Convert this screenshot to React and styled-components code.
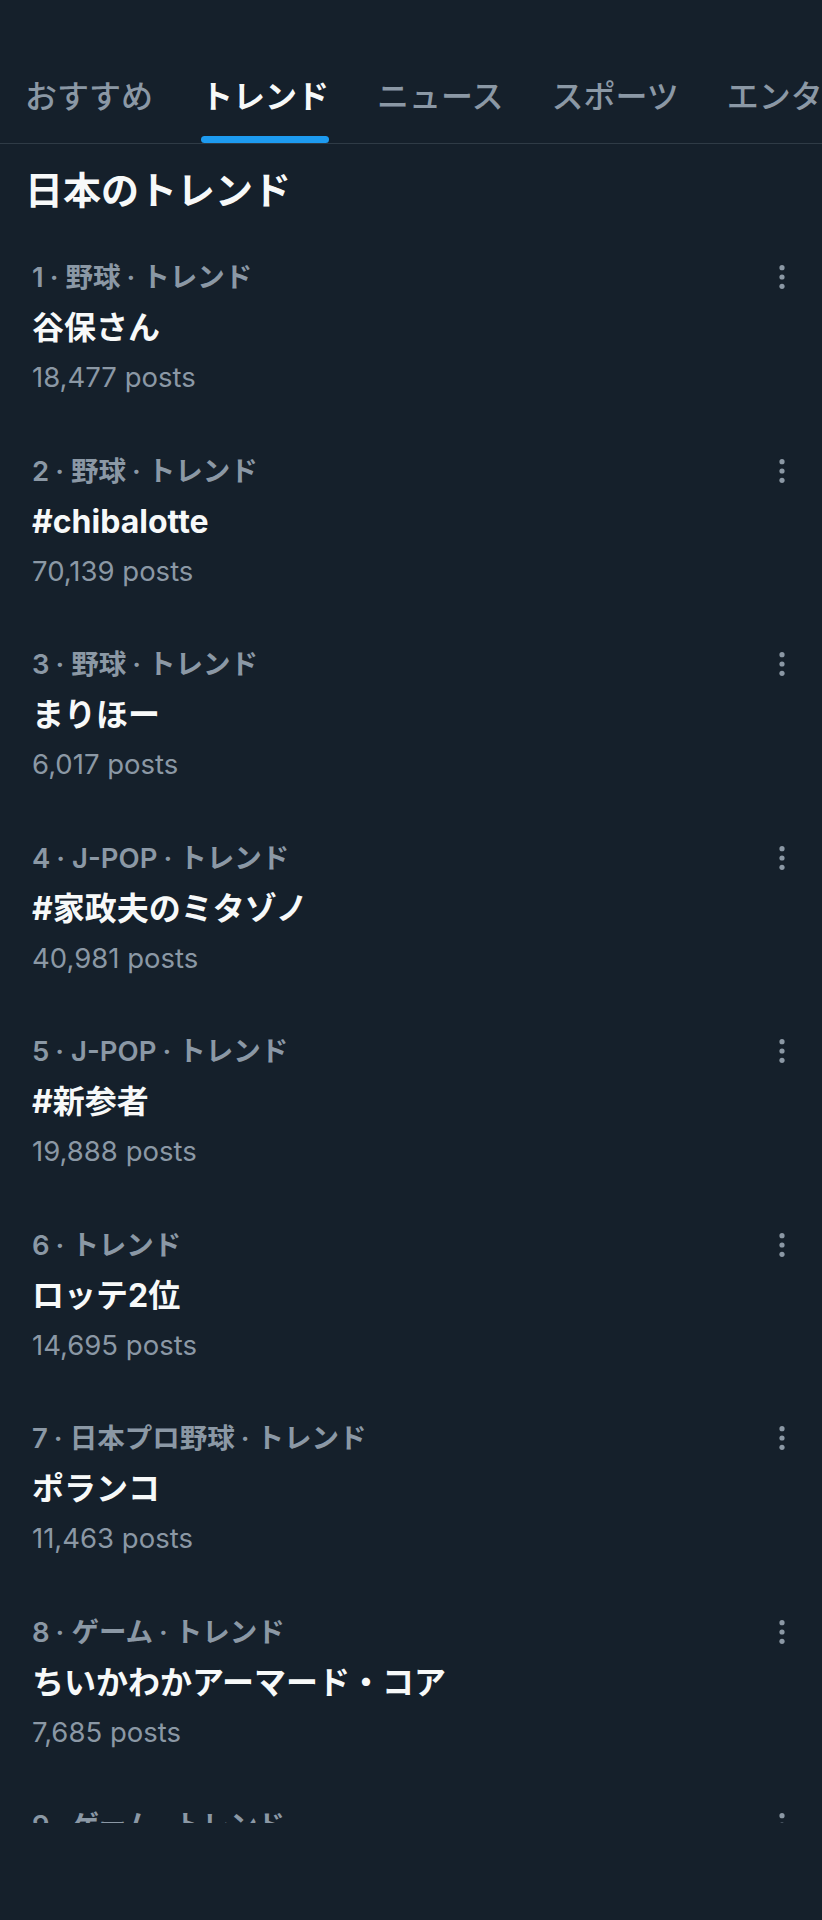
import styled, { createGlobalStyle } from "styled-components";

const GlobalStyle = createGlobalStyle`
  body {
    margin: 0;
    background: #15202b;
    font-family: "Inter", "Noto Sans CJK JP", sans-serif;
  }
`;

const tabs = ["おすすめ", "トレンド", "ニュース", "スポーツ", "エンターテインメント"];

const trends = [
  { rank: 1, category: "野球", title: "谷保さん", posts: "18,477" },
  { rank: 2, category: "野球", title: "#chibalotte", posts: "70,139" },
  { rank: 3, category: "野球", title: "まりほー", posts: "6,017" },
  { rank: 4, category: "J-POP", title: "#家政夫のミタゾノ", posts: "40,981" },
  { rank: 5, category: "J-POP", title: "#新参者", posts: "19,888" },
  { rank: 6, category: null, title: "ロッテ2位", posts: "14,695" },
  { rank: 7, category: "日本プロ野球", title: "ポランコ", posts: "11,463" },
  { rank: 8, category: "ゲーム", title: "ちいかわかアーマード・コア", posts: "7,685" },
  { rank: 9, category: "ゲーム", title: "スプラトゥーン3", posts: "5,210" },
];

function MoreIcon() {
  return (
    <svg width="24" height="36" viewBox="0 0 24 36">
      <circle cx="12" cy="8.7" r="2.6" fill="#8b98a5" />
      <circle cx="12" cy="18" r="2.6" fill="#8b98a5" />
      <circle cx="12" cy="27.3" r="2.6" fill="#8b98a5" />
    </svg>
  );
}

export default function App() {
  return (
    <Screen>
      <GlobalStyle />
      <TabBar>
        {tabs.map((tab) => (
          <Tab key={tab}>
            <TabLabel $active={tab === "トレンド"}>{tab}</TabLabel>
            <TabIndicator $active={tab === "トレンド"} />
          </Tab>
        ))}
      </TabBar>

      <Heading>日本のトレンド</Heading>

      <TrendList>
        {trends.map((trend) => (
          <TrendItem key={trend.rank}>
            <TrendBody>
              <TrendMeta>
                {trend.rank}
                <Dot>·</Dot>
                {trend.category && (
                  <>
                    {trend.category}
                    <Dot>·</Dot>
                  </>
                )}
                トレンド
              </TrendMeta>
              <TrendTitle>{trend.title}</TrendTitle>
              <TrendPosts>{trend.posts} posts</TrendPosts>
            </TrendBody>
            <MoreButton>
              <MoreIcon />
            </MoreButton>
          </TrendItem>
        ))}
      </TrendList>
    </Screen>
  );
}

const Screen = styled.div`
  width: 822px;
  height: 1920px;
  overflow: hidden;
  background: #15202b;
  color: #f7f9f9;
`;

const TabBar = styled.nav`
  display: flex;
  gap: 48px;
  padding: 77px 0 0 25px;
  border-bottom: 1px solid #2f3b46;
  overflow: hidden;
  white-space: nowrap;
`;

const Tab = styled.div`
  display: flex;
  flex-direction: column;
  flex-shrink: 0;
`;

const TabLabel = styled.span`
  font-size: 32px;
  line-height: 40px;
  font-weight: ${({ $active }) => ($active ? 700 : 500)};
  color: ${({ $active }) => ($active ? "#f7f9f9" : "#8b98a5")};
`;

const TabIndicator = styled.div`
  margin-top: 19px;
  height: 7px;
  border-radius: 4px;
  background: ${({ $active }) => ($active ? "#1d9bf0" : "transparent")};
`;

const Heading = styled.h1`
  margin: 22px 0 21px;
  padding-left: 25px;
  font-size: 38px;
  line-height: 48px;
  font-weight: 700;
  color: #f7f9f9;
`;

const TrendList = styled.div`
  height: 1588px;
  overflow: hidden;
`;

const TrendItem = styled.div`
  display: flex;
  align-items: flex-start;
  padding: 24px 28px 31.5px 32px;
`;

const TrendBody = styled.div`
  flex: 1;
  display: flex;
  flex-direction: column;
`;

const TrendMeta = styled.div`
  font-size: 27.5px;
  line-height: 36px;
  font-weight: 600;
  color: #8b98a5;
  white-space: nowrap;
`;

const Dot = styled.span`
  margin: 0 7px 0 6px;
`;

const TrendTitle = styled.div`
  margin-top: 11px;
  font-size: 32px;
  line-height: 44px;
  font-weight: 700;
  color: #f7f9f9;
`;

const TrendPosts = styled.div`
  margin-top: 7px;
  font-size: 27.5px;
  line-height: 40px;
  color: #8b98a5;
`;

const MoreButton = styled.div`
  width: 24px;
  height: 36px;
  display: flex;
  align-items: center;
  justify-content: center;
`;
